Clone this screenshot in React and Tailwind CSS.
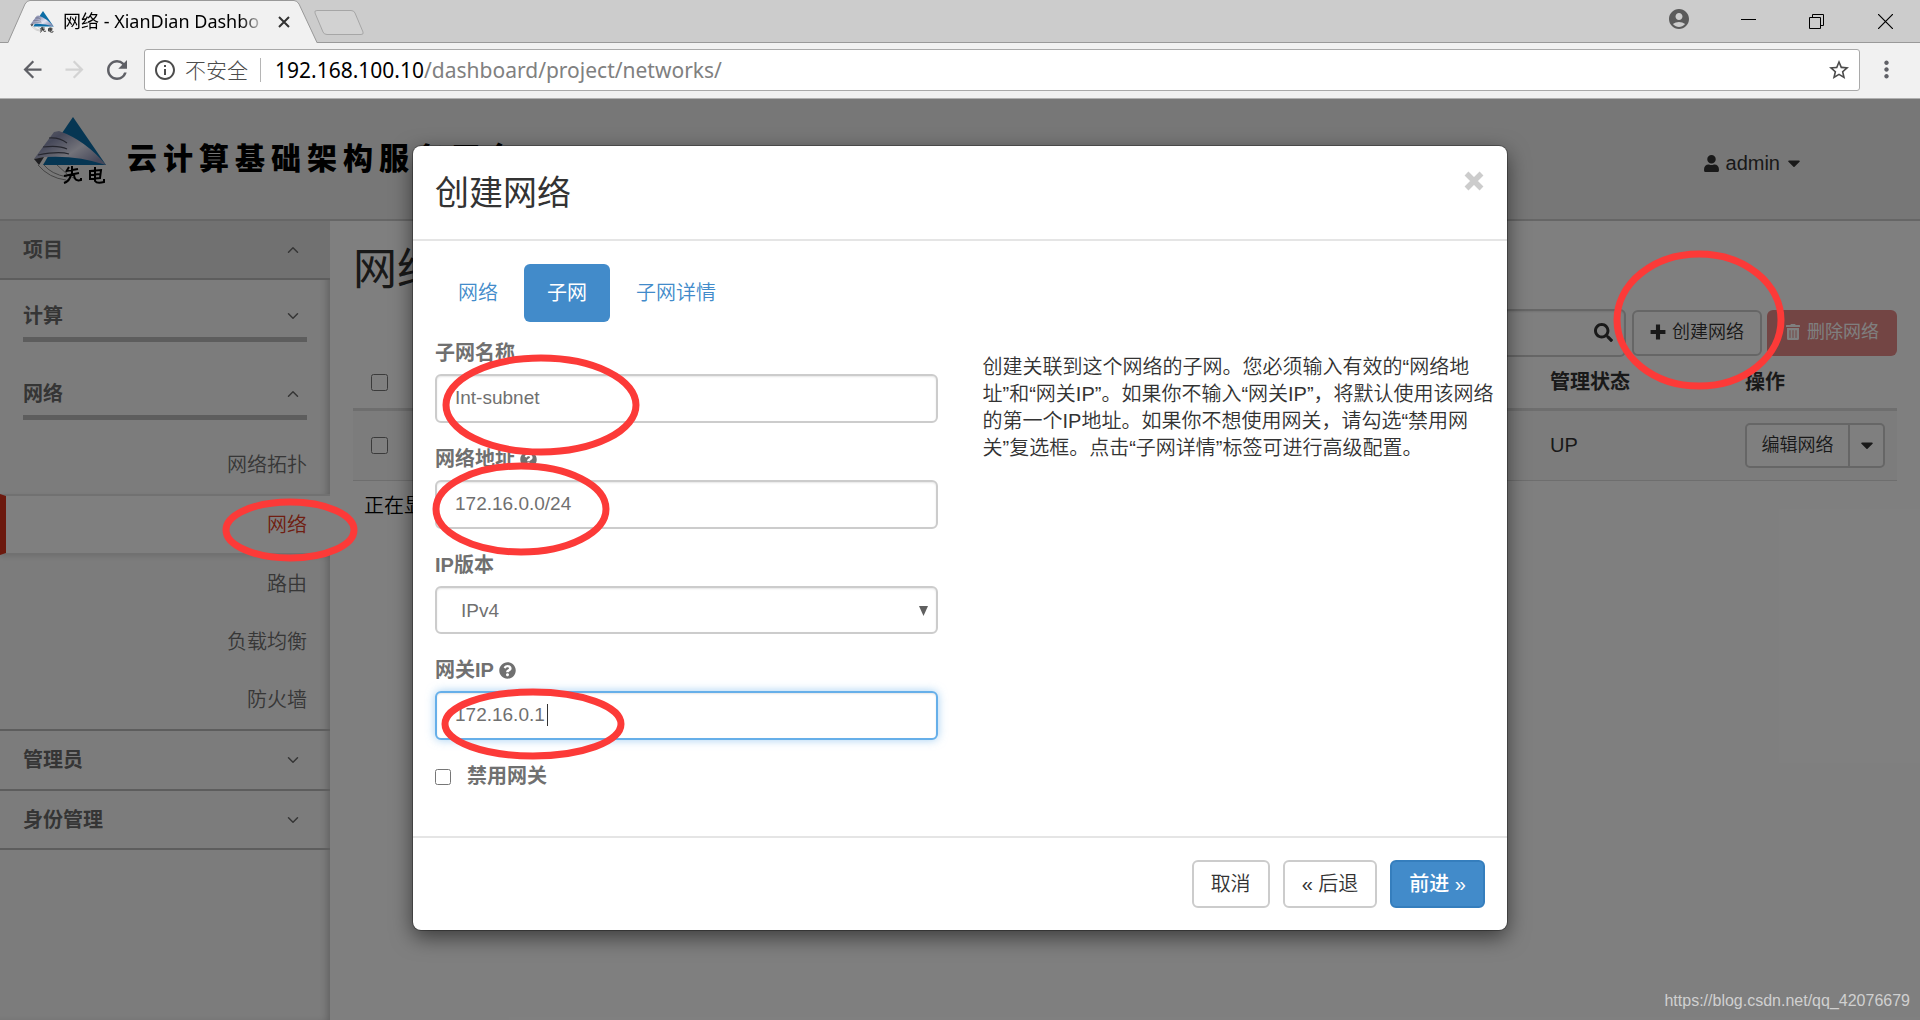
import React from "react";
import {
  FaUser,
  FaCaretDown,
  FaSearch,
  FaTrashAlt,
  FaQuestionCircle,
} from "react-icons/fa";
import {
  MdArrowBack,
  MdArrowForward,
  MdRefresh,
  MdInfoOutline,
  MdStarBorder,
  MdMoreVert,
  MdAccountCircle,
} from "react-icons/md";
import { ChevronUp, ChevronDown } from "lucide-react";

const UI = "font-['Liberation_Sans','Noto_Sans_CJK_SC',sans-serif]";
const CHROME = "font-['Noto_Sans','Noto_Sans_CJK_SC',sans-serif]";

function Emblem({ className }) {
  return (
    <svg viewBox="0 0 74 70" className={className} aria-hidden="true">
      <defs>
        <linearGradient id="wing" x1="0" y1="0" x2="1" y2="0.7">
          <stop offset="0" stopColor="#c4c6d2" />
          <stop offset="0.3" stopColor="#8d92b4" />
          <stop offset="0.65" stopColor="#e6e6f4" />
          <stop offset="1" stopColor="#8c90b4" />
        </linearGradient>
      </defs>
      <path d="M40 1 L73 49 L10 49 L27 20 Z" fill="#0c6da6" />
      <path d="M1 43 L21 16 L26 15 Q52 24 73 49 Q44 39 12 41 Z" fill="url(#wing)" />
      <path d="M16 22 Q26 21 34 27 M10 31 Q26 29 34 33 M5 39 Q26 35 36 38" fill="none" stroke="#4b4d5c" strokeWidth="1.2" />
      <path d="M1 43 L11 41 L6 49 Z" fill="#3b3b40" />
      <path d="M5 49 Q16 62 33 64 M11 49 Q18 58 34 61 M24 49 Q34 60 46 65" fill="none" stroke="#8a8a8a" strokeWidth="1" />
      <path d="M36 51 L33 56 M33 55 L45 53 M39 50 L39 58 M31 60 L46 57 M38 58 Q37 65 31 67 M41 58 Q41 66 48 64 L48 62" fill="none" stroke="#000" strokeWidth="2" />
      <path d="M57 55 L68 54 L67 62 L57 63 Z M57 59 L67 58 M62 51 L62 65 Q64 68 71 66 L71 63" fill="none" stroke="#000" strokeWidth="2" />
    </svg>
  );
}

function BrowserChrome() {
  return (
    <div className={`${CHROME} shrink-0`}>
      <div className="flex h-[43px] items-stretch border-b border-[#999] bg-[#ccc]">
        <div className="relative z-10 -mb-px ml-2 flex w-[312px] items-center">
          <svg viewBox="0 0 312 43" preserveAspectRatio="none" className="absolute inset-0 h-full w-full" aria-hidden="true">
            <path d="M0 43 L17 4 Q19 .5 22 .5 H286 Q289 .5 291 4 L309 43 Z" fill="#f1f1f1" />
            <path d="M0 42.5 L17 4 Q19 .5 22 .5 H286 Q289 .5 291 4 L309 42.5" fill="none" stroke="#999" />
          </svg>
          <Emblem className="relative ml-[22px] h-6 w-6" />
          <span className="relative ml-[9px] w-[202px] whitespace-nowrap bg-linear-to-r from-black from-88% to-transparent bg-clip-text pb-[2px] text-lg leading-7 text-transparent">
            网络 - XianDian Dashbo
          </span>
          <button aria-label="关闭标签页" className="relative ml-[13px]">
            <svg viewBox="0 0 12 12" className="h-3 w-3"><path d="M1 1 L11 11 M11 1 L1 11" stroke="#333" strokeWidth="2" /></svg>
          </button>
        </div>
        <button aria-label="新标签页" className="-ml-[7px] mt-[10px] self-start">
          <svg viewBox="0 0 52 26" className="h-[26px] w-[52px]">
            <path d="M4 .5 H38 Q41 .5 42 3 L50 22 Q51 24.500 48 24.500 H14 Q11 24.500 10 22 L2 3 Q1 .5 4 .5 Z" fill="#d2d2d2" stroke="#a6a6a6" />
          </svg>
        </button>
        <div className="ml-auto mr-6 flex items-center">
          <MdAccountCircle className="mr-[50px] -mt-1 h-6 w-6 text-[#5a5a5a]" />
          <button aria-label="最小化" className="mr-[53px]">
            <svg viewBox="0 0 15 15" className="h-[15px] w-[15px]"><path d="M0 5.500 H15" stroke="#000" /></svg>
          </button>
          <button aria-label="还原" className="mr-[54px]">
            <svg viewBox="0 0 15 15" className="h-[15px] w-[15px]"><path d="M.5 3.500 H11.500 V14.500 H.5 Z M3.500 3.500 V.5 H14.500 V11.500 H11.500" fill="none" stroke="#000" /></svg>
          </button>
          <button aria-label="关闭" className="mr-[3px]">
            <svg viewBox="0 0 15 15" className="h-[15px] w-[15px]"><path d="M0 0 L15 15 M15 0 L0 15" stroke="#000" strokeWidth="1.2" /></svg>
          </button>
        </div>
      </div>
      <div className="flex h-14 items-center border-b border-[#b0b0b0] bg-[#f1f1f1] pb-[2px] pl-[19px] pr-5">
        <button aria-label="后退"><MdArrowBack className="h-[27px] w-[27px] text-[#5f6066]" /></button>
        <button aria-label="前进" className="ml-[15px]"><MdArrowForward className="h-[27px] w-[27px] text-[#d3d3d3]" /></button>
        <button aria-label="刷新" className="ml-[14px]"><MdRefresh className="h-[30px] w-[30px] text-[#5f6066]" /></button>
        <div className="ml-3 flex h-[42px] flex-1 items-center rounded-[3px] border border-[#a9a9a9] bg-white pl-2 pr-2">
          <MdInfoOutline className="h-6 w-6 text-[#4c4c4c]" />
          <span className="ml-2 text-[21px] leading-7 font-light text-[#4c4c4c]">不安全</span>
          <span className="ml-3 mr-[14px] h-6 w-px bg-[#b5b5b5]" />
          <span className="text-[21px] leading-7 text-[#808080]">
            <span className="text-black">192.168.100.10</span>/dashboard/project/networks/
          </span>
          <MdStarBorder className="ml-auto h-6 w-6 text-[#4c4c4c]" />
        </div>
        <button aria-label="菜单" className="ml-[13px]"><MdMoreVert className="h-[27px] w-[27px] text-[#5f6066]" /></button>
      </div>
    </div>
  );
}

function TopBar() {
  return (
    <header className="flex h-[122px] shrink-0 items-center justify-between border-b-2 border-[#ccc] bg-[#eee] pl-[33px] pr-[118px]">
      <div className="flex items-center">
        <Emblem className="-mt-4 h-[70px] w-[74px]" />
        <h2 className="ml-5 flex gap-[6px] text-[30px] leading-9 font-black text-black">
          {Array.from("云计算基础架构服务平台").map((c, i) => <span key={i}>{c}</span>)}
        </h2>
      </div>
      <button className="mt-2 flex items-center text-xl leading-7 text-[#333]">
        <FaUser className="mr-[6px] h-[17px] w-[17px]" />
        admin
        <FaCaretDown className="ml-[6px] h-5 w-4" />
      </button>
    </header>
  );
}

function PanelHead({ label, open, className = "" }) {
  const Icon = open ? ChevronUp : ChevronDown;
  return (
    <button className={`flex w-full items-center justify-between border-b-2 border-[#bababa] pl-[23px] pr-7 text-xl leading-7 font-bold text-[#6b6b6b] ${className}`}>
      {label}
      <Icon className="h-[18px] w-[18px]" strokeWidth={2} />
    </button>
  );
}

function GroupHead({ label, open }) {
  const Icon = open ? ChevronUp : ChevronDown;
  return (
    <button className="mx-[23px] flex h-10 items-start justify-between border-b-[5px] border-[#bababa] pr-[5px] text-xl leading-7 font-bold text-[#6b6b6b]">
      {label}
      <Icon className="mt-[5px] h-[18px] w-[18px]" strokeWidth={2} />
    </button>
  );
}

function SideLink({ label }) {
  return <a href="#" className="flex h-[58px] items-center justify-end pr-[23px] text-xl leading-7 font-[350] text-[#6e6e6e]">{label}</a>;
}

function Sidebar() {
  return (
    <nav className="flex w-[330px] shrink-0 flex-col bg-[#f9f9f9] shadow-[inset_-6px_0_8px_-4px_rgba(0,0,0,0.25)]">
      <PanelHead label="项目" open className="h-[59px] bg-[#e2e2e2]" />
      <div className="flex flex-col gap-[38px] pt-[22px]">
        <GroupHead label="计算" />
        <GroupHead label="网络" open />
      </div>
      <div className="flex flex-col border-b-2 border-[#bababa] pt-4">
        <SideLink label="网络拓扑" />
        <a href="#" className="flex h-[61px] items-center justify-end border-y-2 border-l-[6px] border-y-[#e2e2e2] border-l-[#d9331c] bg-white pr-[23px] text-xl leading-7 font-[350] text-[#e03c24] shadow-[0_2px_5px_rgba(0,0,0,0.1)]">
          网络
        </a>
        <SideLink label="路由" />
        <SideLink label="负载均衡" />
        <SideLink label="防火墙" />
      </div>
      <PanelHead label="管理员" className="h-[60px]" />
      <PanelHead label="身份管理" className="h-[59px]" />
    </nav>
  );
}

function MainContent() {
  return (
    <main className="min-w-0 flex-1 bg-white pl-[23px] pr-[23px] pt-4 text-xl leading-7 text-[#333]">
      <h1 className="text-[44px] leading-[66px]">网络</h1>
      <div className="mt-[6px] flex items-center justify-end">
        <div className="relative mr-[6px]">
          <input aria-label="筛选" className="h-[48px] w-[320px] rounded-[6px] border-2 border-[#ccc] shadow-[inset_0_1px_2px_rgba(0,0,0,0.1)]" />
          <FaSearch className="absolute right-[13px] top-[14px] h-[19px] w-[19px]" />
        </div>
        <button className="flex h-[46px] items-center rounded-[6px] border-2 border-[#ccc] px-4 pb-[2px] text-lg font-[350]">
          <svg viewBox="0 0 14 14" className="mr-[6px] h-4 w-4" aria-hidden="true"><path d="M7 0.500 V13.500 M0.500 7 H13.500" stroke="currentColor" strokeWidth="3.600" /></svg>
          创建网络
        </button>
        <button className="ml-[5px] flex h-[46px] items-center rounded-[6px] bg-[#e68a88] px-[18px] pb-[2px] text-lg text-white">
          <FaTrashAlt className="mr-[6px] h-4 w-4" />删除网络
        </button>
      </div>
      <table className="w-full table-fixed border-collapse text-left">
        <thead>
          <tr className="h-[52px] border-b-[3px] border-[#ddd]">
            <th className="w-[60px] pl-[18px]"><input type="checkbox" aria-label="全选" className="block h-[17px] w-[17px]" /></th>
            <th />
            <th className="w-[195px] pl-[11px] font-bold">管理状态</th>
            <th className="w-[163px] pl-[11px] font-bold">操作</th>
          </tr>
        </thead>
        <tbody>
          <tr className="h-[71px] border-b border-[#ddd] bg-[#f9f9f9]">
            <td className="pl-[18px]"><input type="checkbox" aria-label="选择网络" className="block h-[17px] w-[17px]" /></td>
            <td />
            <td className="pl-[11px]">UP</td>
            <td className="pl-[11px]">
              <div className="flex h-[45px] w-[140px] rounded-[5px] border-2 border-[#ccc] bg-white">
                <button className="flex-1 text-lg font-[350]">编辑网络</button>
                <button aria-label="更多操作" className="flex w-[35px] items-center justify-center border-l-2 border-[#ccc]"><FaCaretDown className="h-5 w-4" /></button>
              </div>
            </td>
          </tr>
        </tbody>
      </table>
      <p className="pl-[11px] pt-[11px] font-[350] text-black">正在显示 1 项</p>
    </main>
  );
}

function Field({ id, label, help, children }) {
  return (
    <div className="mb-[23px]">
      <label htmlFor={id} className="mb-[7px] flex items-center font-bold text-[#707070]">
        {label}
        {help && <FaQuestionCircle className="ml-[5px] h-[17px] w-[17px]" />}
      </label>
      {children}
    </div>
  );
}

const INPUT =
  "block h-[49px] w-full rounded-[6px] border-2 border-[#ccc] bg-white pl-[18px] pb-[2px] text-[19px] text-[#707070] shadow-[inset_0_1px_2px_rgba(0,0,0,0.1)]";
const FOCUSED =
  "block h-[49px] w-full rounded-[6px] border-2 border-[#66afe9] bg-white pl-[18px] pb-[2px] text-[19px] text-[#707070] shadow-[inset_0_1px_2px_rgba(0,0,0,0.1),0_0_10px_rgba(102,175,233,0.6)]";
const BTN = "h-12 rounded-[6px] border-2 border-[#ccc] bg-white px-[17px] font-[350] text-[#333]";

function Modal() {
  return (
    <div role="dialog" aria-label="创建网络" className="mx-auto w-full max-w-[1094px] rounded-[8px] bg-white text-xl leading-[27px] text-[#333] shadow-[0_0_0_1px_rgba(0,0,0,0.3),0_7px_21px_rgba(0,0,0,0.55)]">
      <div className="flex h-[95px] items-center justify-between border-b-2 border-[#e5e5e5] px-[22px]">
        <h3 className="text-[34px] leading-[50px]">创建网络</h3>
        <button aria-label="关闭" className="-mt-6 mr-px">
          <svg viewBox="0 0 20 20" className="h-5 w-5"><path d="M2.500 2.500 L17.500 17.500 M17.500 2.500 L2.500 17.500" stroke="#ccc" strokeWidth="5.500" /></svg>
        </button>
      </div>
      <div className="px-[22px] pt-[23px]">
        <div role="tablist" className="flex gap-[3px] text-[#428bca]">
          <button role="tab" className="h-[58px] px-[23px] font-[350]">网络</button>
          <button role="tab" aria-selected="true" className="h-[58px] rounded-[6px] bg-[#428bca] px-[23px] text-white">子网</button>
          <button role="tab" className="h-[58px] px-[23px] font-[350]">子网详情</button>
        </div>
        <div className="grid grid-cols-2 gap-[45px] pt-[18px]">
          <form>
            <Field id="name" label="子网名称"><input id="name" className={INPUT} defaultValue="Int-subnet" /></Field>
            <Field id="cidr" label="网络地址" help><input id="cidr" className={INPUT} defaultValue="172.16.0.0/24" /></Field>
            <Field id="ver" label="IP版本">
              <div className="relative">
                <select id="ver" className="block h-12 w-full appearance-none rounded-[6px] border-2 border-[#ccc] bg-white pl-6 text-[19px] text-[#707070] shadow-[inset_0_1px_2px_rgba(0,0,0,0.1)]">
                  <option>IPv4</option>
                </select>
                <svg viewBox="0 0 9 10" className="pointer-events-none absolute right-[10px] top-5 h-[10px] w-[9px]"><path d="M0 0 H9 L4.500 10 Z" fill="#606060" /></svg>
              </div>
            </Field>
            <Field id="gw" label="网关IP" help>
              <div className="relative">
                <input id="gw" className={FOCUSED} defaultValue="172.16.0.1" />
                <span className="absolute left-[112px] top-[13px] h-[22px] w-px bg-[#333]" />
              </div>
            </Field>
            <label className="flex items-center font-bold text-[#707070]">
              <input type="checkbox" className="mr-4 h-4 w-4" />禁用网关
            </label>
          </form>
          <p className="whitespace-nowrap pt-[14px] font-[350]">
            创建关联到这个网络的子网。您必须输入有效的“网络地<br />
            址”和“网关IP”。如果你不输入“网关IP”，将默认使用该网络<br />
            的第一个IP地址。如果你不想使用网关，请勾选“禁用网<br />
            关”复选框。点击“子网详情”标签可进行高级配置。
          </p>
        </div>
      </div>
      <div className="mt-[46px] flex justify-end gap-[13px] border-t-2 border-[#e5e5e5] p-[22px]">
        <button className={BTN}>取消</button>
        <button className={BTN}>« 后退</button>
        <button className="h-12 rounded-[6px] border-2 border-[#357ebd] bg-[#428bca] px-[17px] font-medium text-white">前进 »</button>
      </div>
    </div>
  );
}

const MARKS = [
  [290, 530, 64, 28],
  [541, 405, 95, 47],
  [521, 509, 85, 43],
  [533, 724, 88, 32],
  [1699, 320, 82, 66],
];

export default function App() {
  return (
    <div className={`relative flex min-h-screen flex-col ${UI}`}>
      <BrowserChrome />
      <div className="relative flex flex-1 flex-col">
        <TopBar />
        <div className="flex flex-1">
          <Sidebar />
          <MainContent />
        </div>
        <div className="absolute inset-0 bg-black/50 pt-[47px]">
          <Modal />
        </div>
      </div>
      <svg className="pointer-events-none absolute inset-0 h-full w-full" aria-hidden="true">
        {MARKS.map(([cx, cy, rx, ry]) => (
          <ellipse key={cy} cx={cx} cy={cy} rx={rx} ry={ry} fill="none" stroke="#fc3a38" strokeWidth="7" />
        ))}
      </svg>
      <span className="absolute bottom-[5px] right-[10px] text-base leading-7 text-[#d0d0d0]">https://blog.csdn.net/qq_42076679</span>
    </div>
  );
}
